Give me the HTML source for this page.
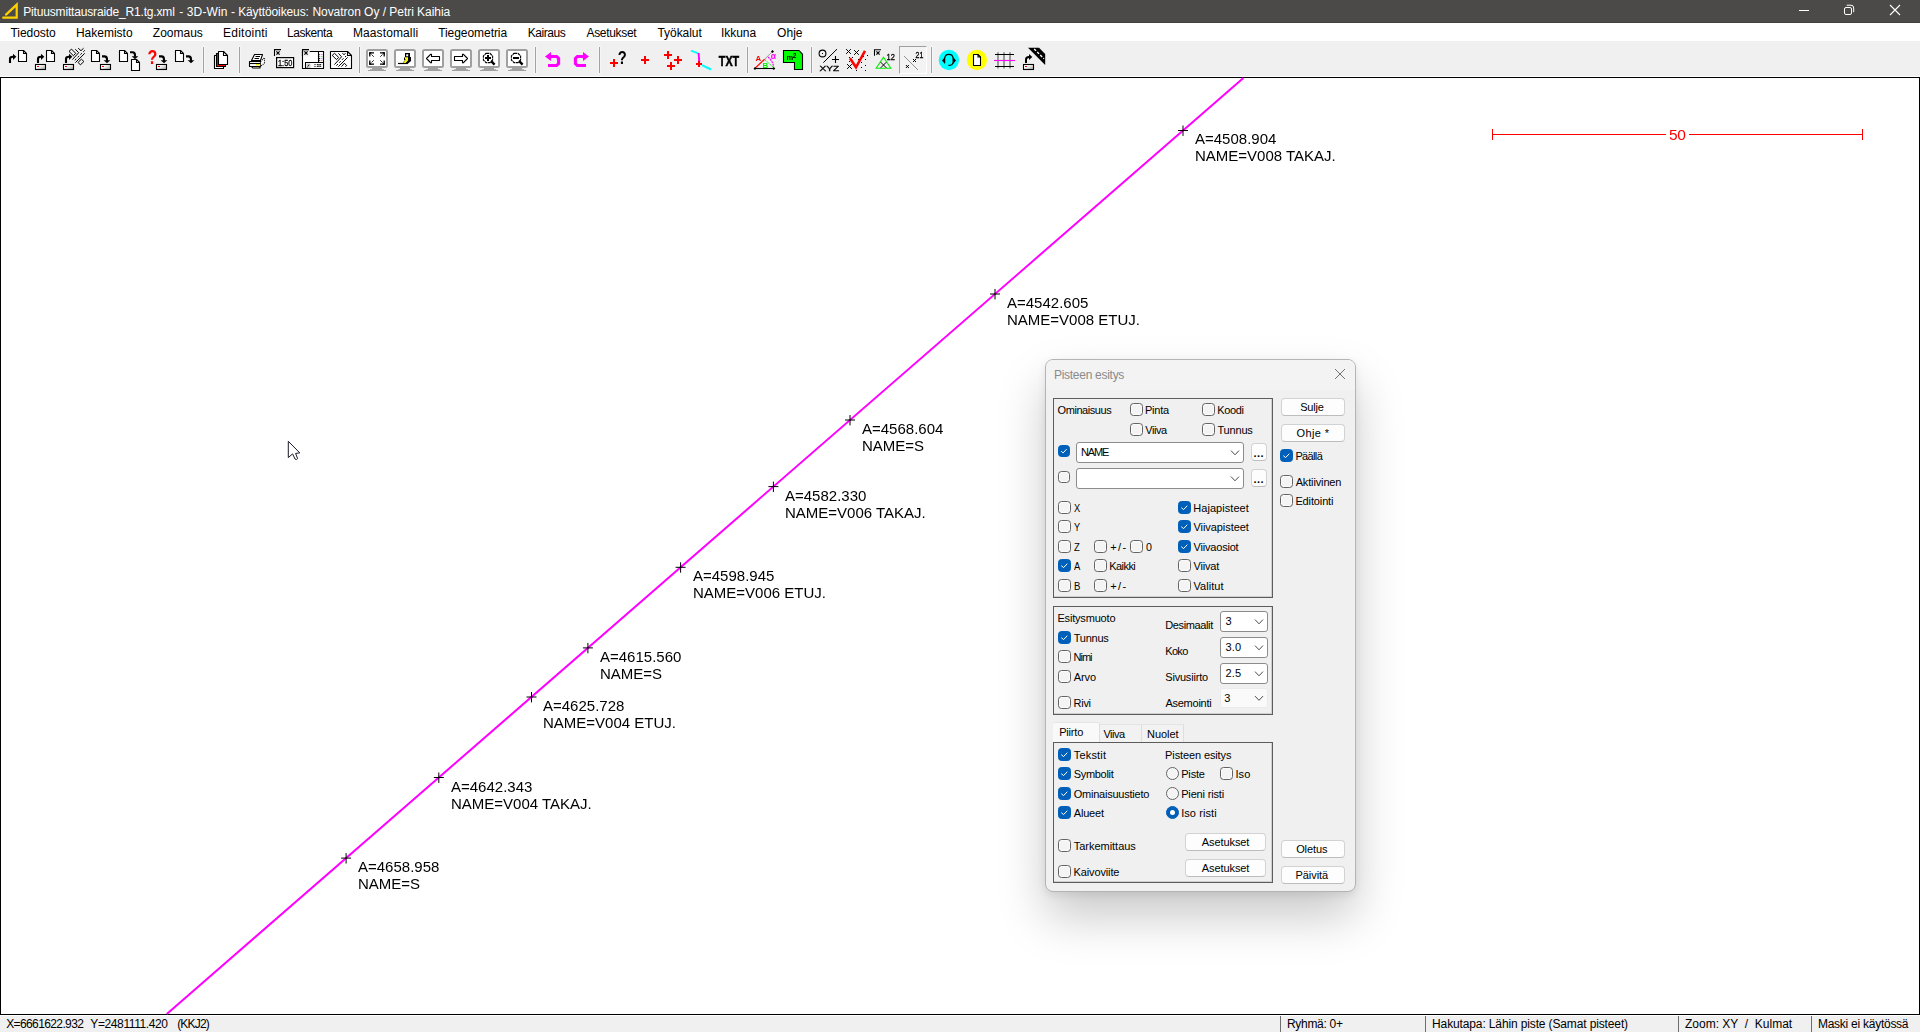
<!DOCTYPE html>
<html lang="fi">
<head>
<meta charset="utf-8">
<title>Pituusmittausraide_R1.tg.xml - 3D-Win</title>
<style>
html,body{margin:0;padding:0;}
body{width:1920px;height:1032px;position:relative;overflow:hidden;background:#fff;font-family:'Liberation Sans',sans-serif;}
.a{position:absolute;}
.g{will-change:transform;}
.t{position:absolute;white-space:pre;line-height:1;color:#000;font-family:'Liberation Sans',sans-serif;}
.cb{position:absolute;width:13px;height:13px;box-sizing:border-box;border:1px solid #636363;border-radius:3.5px;background:#f4f4f4;box-shadow:inset 0 0 0 1px #fbfbfb;}
.cb.on{border-color:#005fb8;background:#005fb8;box-shadow:none;}
.rb{position:absolute;width:13px;height:13px;box-sizing:border-box;border:1px solid #636363;border-radius:50%;background:#f4f4f4;box-shadow:inset 0 0 0 1px #fbfbfb;}
.rb.on{border-color:#005fb8;background:#005fb8;box-shadow:none;}
.rb.on:after{content:"";position:absolute;left:3px;top:3px;width:5px;height:5px;border-radius:50%;background:#fff;}
.btn{position:absolute;box-sizing:border-box;height:18px;border:1px solid #d2d2d2;border-bottom-color:#bdbdbd;border-radius:4px;background:#fdfdfd;}
.cmb{position:absolute;box-sizing:border-box;border:1px solid #8c8c8c;border-radius:3px;background:#fff;}
.grp{position:absolute;box-sizing:border-box;border:1px solid #5c5c5c;box-shadow:-1px -1px 0 #cfcfcf inset, 0 0 0 0 #fff;}
.sep{position:absolute;top:47px;width:1px;height:26px;background:#a2a2a2;box-shadow:0 0 0 1px rgba(255,255,255,.4);}
.ssep{position:absolute;top:1016px;width:1px;height:16px;background:#6e6e6e;}
</style>
</head>
<body>
<div class="a" style="left:0;top:0;width:1920px;height:23px;background:#4b4a48"></div>
<div class="a" style="left:0;top:22px;width:1920px;height:1px;background:#413f3d"></div>
<div class="a" style="left:0;top:23px;width:1920px;height:18px;background:#fff"></div>
<div class="a" style="left:0;top:41px;width:1920px;height:35px;background:#f0f0f0"></div>
<div class="a" style="left:0;top:76px;width:1920px;height:1px;background:#fff"></div>
<div class="a" style="left:0;top:77px;width:1920px;height:938px;box-sizing:border-box;border:1px solid #000;background:#fff"></div>
<div class="a" style="left:0;top:1015px;width:1920px;height:1px;background:#fff"></div>
<div class="a" style="left:0;top:1016px;width:1920px;height:16px;background:#f0f0f0"></div>
<svg class="a" style="left:0;top:0" width="1920" height="23" viewBox="0 0 1920 23">
<path d="M3.2,17.7 H16.7 V4.6 L6,14.6" fill="none" stroke="#ffd000" stroke-width="2.2" stroke-linejoin="miter" stroke-linecap="round"/>
<path d="M1799,10.5 H1809" stroke="#fff" stroke-width="1"/>
<rect x="1844.5" y="7.5" width="7" height="7" rx="1.5" fill="none" stroke="#fff" stroke-width="1"/>
<path d="M1846.7,5.2 H1851 Q1853.7,5.2 1853.7,8 V12.2" fill="none" stroke="#fff" stroke-width="1"/>
<path d="M1890,5 L1900,15 M1900,5 L1890,15" stroke="#fff" stroke-width="1.1"/>
</svg>
<div class="ssep" style="left:1280px"></div>
<div class="ssep" style="left:1425px"></div>
<div class="ssep" style="left:1678px"></div>
<div class="ssep" style="left:1811px"></div>
<svg class="a" style="left:0;top:77px" width="1920" height="938" viewBox="0 77 1920 938">
<path d="M1243.4,78 L166.8,1014" stroke="#ff00ff" stroke-width="2" fill="none"/>
<path d="M1178.0,130.5 h10 M1183.0,125.5 v10.4 M990.0,294.0 h10 M995.0,289.0 v10.4 M845.0,420.0 h10 M850.0,415.0 v10.4 M768.4,486.6 h10 M773.4,481.6 v10.4 M675.6,567.3 h10 M680.6,562.3 v10.4 M582.9,647.9 h10 M587.9,642.9 v10.4 M526.5,697.0 h10 M531.5,692.0 v10.4 M433.8,777.5 h10 M438.8,772.5 v10.4 M341.1,858.1 h10 M346.1,853.1 v10.4" stroke="#000" stroke-width="1" fill="none"/>
<path d="M1492.5,129 v11 M1862.5,129 v11 M1492,134.5 H1666 M1689,134.5 H1863" stroke="#ff0000" stroke-width="1" fill="none" shape-rendering="crispEdges"/>
<path d="M288.3,441.3 V457.6 L292.6,453.9 L295,459 Q296.3,460.4 297.6,458.6 L295.6,453.4 L299.8,452.9 Z" fill="#fff" stroke="#1b1b28" stroke-width="1" stroke-linejoin="round"/>
</svg>
<div class="a" style="left:1045px;top:359px;width:311px;height:533px;box-sizing:border-box;border:1px solid #b4b4b4;border-radius:8px;background:#f0f0f0;box-shadow:0 25px 48px rgba(0,0,0,.21),0 3px 8px rgba(0,0,0,.08);overflow:hidden"><div style="height:30px;background:#f3f3f3"></div></div>
<svg class="a" style="left:1330px;top:364px" width="20" height="20" viewBox="1330 364 20 20"><path d="M1335,369 L1345,379 M1345,369 L1335,379" stroke="#6a6a6a" stroke-width=".95"/></svg>
<div class="grp" style="left:1053px;top:398px;width:220px;height:200px"></div>
<div class="grp" style="left:1053px;top:606px;width:220px;height:109px"></div>
<div class="a" style="left:1053px;top:722px;width:47px;height:20px;box-sizing:border-box;border-top:1px solid #e6e6e6;border-right:1px solid #dedede;border-radius:2px 2px 0 0;background:#f9f9f9"></div>
<div class="a" style="left:1100px;top:724px;width:42px;height:18px;box-sizing:border-box;border-top:1px solid #e4e4e4;border-right:1px solid #dedede;background:#f2f2f2"></div>
<div class="a" style="left:1142px;top:724px;width:42px;height:18px;box-sizing:border-box;border-top:1px solid #e4e4e4;border-right:1px solid #dedede;background:#f2f2f2"></div>
<div class="grp" style="left:1053px;top:742px;width:220px;height:141px"></div>
<div class="cb" style="left:1130px;top:403px"></div>
<div class="cb" style="left:1202px;top:403px"></div>
<div class="cb" style="left:1130px;top:423px"></div>
<div class="cb" style="left:1202px;top:423px"></div>
<div class="cb on" style="left:1058px;top:445px;width:12px;height:12px"><svg width="10" height="10" viewBox="0 0 10 10" style="position:absolute;left:0;top:0"><path d="M2.2,5.2 L4.1,6.9 L7.6,3.2" fill="none" stroke="#fff" stroke-width="1"/></svg></div>
<div class="cb" style="left:1058px;top:471px;width:12px;height:12px"></div>
<div class="cmb" style="left:1076px;top:442px;width:168px;height:21px;"></div>
<svg class="a" style="left:1229px;top:442px" width="12" height="21" viewBox="1229 442 12 21"><path d="M1231,450.6 L1235,454.8 L1239,450.6" fill="none" stroke="#4a4a4a" stroke-width="1"/></svg>
<div class="cmb" style="left:1076px;top:468px;width:168px;height:21px;"></div>
<svg class="a" style="left:1229px;top:468px" width="12" height="21" viewBox="1229 468 12 21"><path d="M1231,476.6 L1235,480.8 L1239,476.6" fill="none" stroke="#4a4a4a" stroke-width="1"/></svg>
<div class="btn" style="left:1251px;top:443px;width:16px;height:18px"></div>
<div class="btn" style="left:1251px;top:469px;width:16px;height:18px"></div>
<div class="cb" style="left:1058px;top:501px"></div>
<div class="cb" style="left:1058px;top:520px"></div>
<div class="cb" style="left:1058px;top:540px"></div>
<div class="cb on" style="left:1058px;top:559px"><svg width="11" height="11" viewBox="0 0 11 11" style="position:absolute;left:0;top:0"><path d="M2.3,5.7 L4.6,7.6 L8.3,3.7" fill="none" stroke="#fff" stroke-width="1"/></svg></div>
<div class="cb" style="left:1058px;top:579px"></div>
<div class="cb" style="left:1094px;top:540px"></div>
<div class="cb" style="left:1130px;top:540px"></div>
<div class="cb" style="left:1094px;top:559px"></div>
<div class="cb" style="left:1094px;top:579px"></div>
<div class="cb on" style="left:1178px;top:501px"><svg width="11" height="11" viewBox="0 0 11 11" style="position:absolute;left:0;top:0"><path d="M2.3,5.7 L4.6,7.6 L8.3,3.7" fill="none" stroke="#fff" stroke-width="1"/></svg></div>
<div class="cb on" style="left:1178px;top:520px"><svg width="11" height="11" viewBox="0 0 11 11" style="position:absolute;left:0;top:0"><path d="M2.3,5.7 L4.6,7.6 L8.3,3.7" fill="none" stroke="#fff" stroke-width="1"/></svg></div>
<div class="cb on" style="left:1178px;top:540px"><svg width="11" height="11" viewBox="0 0 11 11" style="position:absolute;left:0;top:0"><path d="M2.3,5.7 L4.6,7.6 L8.3,3.7" fill="none" stroke="#fff" stroke-width="1"/></svg></div>
<div class="cb" style="left:1178px;top:559px"></div>
<div class="cb" style="left:1178px;top:579px"></div>
<div class="btn" style="left:1281px;top:398px;width:64px;height:18px"></div>
<div class="btn" style="left:1281px;top:424px;width:64px;height:18px"></div>
<div class="cb on" style="left:1280px;top:449px"><svg width="11" height="11" viewBox="0 0 11 11" style="position:absolute;left:0;top:0"><path d="M2.3,5.7 L4.6,7.6 L8.3,3.7" fill="none" stroke="#fff" stroke-width="1"/></svg></div>
<div class="cb" style="left:1280px;top:475px"></div>
<div class="cb" style="left:1280px;top:494px"></div>
<div class="btn" style="left:1281px;top:840px;width:64px;height:18px"></div>
<div class="btn" style="left:1281px;top:866px;width:64px;height:18px"></div>
<div class="cb on" style="left:1058px;top:631px"><svg width="11" height="11" viewBox="0 0 11 11" style="position:absolute;left:0;top:0"><path d="M2.3,5.7 L4.6,7.6 L8.3,3.7" fill="none" stroke="#fff" stroke-width="1"/></svg></div>
<div class="cb" style="left:1058px;top:650px"></div>
<div class="cb" style="left:1058px;top:670px"></div>
<div class="cb" style="left:1058px;top:696px"></div>
<div class="cmb" style="left:1220px;top:611px;width:48px;height:21px;"></div>
<svg class="a" style="left:1253px;top:611px" width="12" height="21" viewBox="1253 611 12 21"><path d="M1255,619.5999999999999 L1259,623.8 L1263,619.5999999999999" fill="none" stroke="#4a4a4a" stroke-width="1"/></svg>
<div class="cmb" style="left:1220px;top:637px;width:48px;height:21px;"></div>
<svg class="a" style="left:1253px;top:637px" width="12" height="21" viewBox="1253 637 12 21"><path d="M1255,645.5999999999999 L1259,649.8 L1263,645.5999999999999" fill="none" stroke="#4a4a4a" stroke-width="1"/></svg>
<div class="cmb" style="left:1220px;top:663px;width:48px;height:21px;"></div>
<svg class="a" style="left:1253px;top:663px" width="12" height="21" viewBox="1253 663 12 21"><path d="M1255,671.5999999999999 L1259,675.8 L1263,671.5999999999999" fill="none" stroke="#4a4a4a" stroke-width="1"/></svg>
<div class="cmb" style="left:1220px;top:688px;width:48px;height:20px;border-color:#ebebeb;background:#fafafa;"></div>
<svg class="a" style="left:1253px;top:688px" width="12" height="20" viewBox="1253 688 12 20"><path d="M1255,696.0999999999999 L1259,700.3 L1263,696.0999999999999" fill="none" stroke="#4a4a4a" stroke-width="1"/></svg>
<div class="cb on" style="left:1058px;top:748px"><svg width="11" height="11" viewBox="0 0 11 11" style="position:absolute;left:0;top:0"><path d="M2.3,5.7 L4.6,7.6 L8.3,3.7" fill="none" stroke="#fff" stroke-width="1"/></svg></div>
<div class="cb on" style="left:1058px;top:767px"><svg width="11" height="11" viewBox="0 0 11 11" style="position:absolute;left:0;top:0"><path d="M2.3,5.7 L4.6,7.6 L8.3,3.7" fill="none" stroke="#fff" stroke-width="1"/></svg></div>
<div class="cb on" style="left:1058px;top:787px"><svg width="11" height="11" viewBox="0 0 11 11" style="position:absolute;left:0;top:0"><path d="M2.3,5.7 L4.6,7.6 L8.3,3.7" fill="none" stroke="#fff" stroke-width="1"/></svg></div>
<div class="cb on" style="left:1058px;top:806px"><svg width="11" height="11" viewBox="0 0 11 11" style="position:absolute;left:0;top:0"><path d="M2.3,5.7 L4.6,7.6 L8.3,3.7" fill="none" stroke="#fff" stroke-width="1"/></svg></div>
<div class="cb" style="left:1058px;top:839px"></div>
<div class="cb" style="left:1058px;top:865px"></div>
<div class="rb" style="left:1166px;top:767px"></div>
<div class="cb" style="left:1220px;top:767px"></div>
<div class="rb" style="left:1166px;top:787px"></div>
<div class="rb on" style="left:1166px;top:806px"></div>
<div class="btn" style="left:1185px;top:833px;width:81px;height:18px"></div>
<div class="btn" style="left:1185px;top:859px;width:81px;height:18px"></div>
<div class="sep" style="left:203px"></div>
<div class="sep" style="left:239px"></div>
<div class="sep" style="left:359px"></div>
<div class="sep" style="left:535px"></div>
<div class="sep" style="left:599px"></div>
<div class="sep" style="left:747px"></div>
<div class="sep" style="left:811px"></div>
<div class="sep" style="left:931px"></div>
<div class="a" style="left:899px;top:46px;width:28px;height:28px;box-sizing:border-box;border:1px solid #a0a0a0;border-right-color:#fff;border-bottom-color:#fff;background:#f3f3f3"></div>
<svg class="a" style="left:0;top:41px" width="1100" height="36" viewBox="0 41 1100 36"><defs><linearGradient id="dg" x1="0" y1="0" x2="1" y2="1"><stop offset="0.35" stop-color="#fff"/><stop offset="1" stop-color="#9a9a9a"/></linearGradient></defs>
<path d="M10,63 V59 Q10,56.8 13,56.8 H14" fill="none" stroke="#000" stroke-width="2.1"/><path d="M13,53.7 L16.3,56.8 L13,59.9 Z" fill="#000"/><path d="M18.5,50.5 H23.5 L26.5,53.5 V61.5 H18.5 Z" fill="#fff" stroke="#000" stroke-width="1.1" stroke-linejoin="round"/><path d="M23.5,50.5 V53.5 H26.5" fill="none" stroke="#000" stroke-width="1.1"/>
<path d="M38,63 V59 Q38,56.8 41,56.8 H42" fill="none" stroke="#000" stroke-width="2.1"/><path d="M41,53.7 L44.3,56.8 L41,59.9 Z" fill="#000"/><path d="M46.5,50.5 H51.5 L54.5,53.5 V61.5 H46.5 Z" fill="#fff" stroke="#000" stroke-width="1.1" stroke-linejoin="round"/><path d="M51.5,50.5 V53.5 H54.5" fill="none" stroke="#000" stroke-width="1.1"/><rect x="35.5" y="64.5" width="10" height="5" fill="url(#dg)" stroke="#000" stroke-width="1.1"/><rect x="37" y="66" width="2" height="1" fill="#f00"/>
<path d="M66,63 V59 Q66,56.8 69,56.8 H70" fill="none" stroke="#000" stroke-width="2.1"/><path d="M69,53.7 L72.3,56.8 L69,59.9 Z" fill="#000"/><rect x="63.5" y="64.5" width="10" height="5" fill="url(#dg)" stroke="#000" stroke-width="1.1"/><rect x="65" y="66" width="2" height="1" fill="#f00"/><g stroke="#000" stroke-width="1" fill="none"><path d="M69.0,51.4 L71.5,49.1 L75.7,53.3 L73.4,55.7 Z"/><path d="M75.3,49.2 L78.7,52.7 L72.4,59.6"/><path d="M78.2,48.2 L81.0,50.7 L83.6,48.2"/><path d="M84.8,53.3 L75.3,62.7"/><path d="M81.4,59.2 L83.9,61.5 L80.4,64.9 L78.1,62.4 Z"/><path d="M84.8,50.3 L74.3,60.8" stroke-dasharray="2.2 1.8"/></g>
<path d="M91.5,50.5 H96.5 L99.5,53.5 V61.5 H91.5 Z" fill="#fff" stroke="#000" stroke-width="1.1" stroke-linejoin="round"/><path d="M96.5,50.5 V53.5 H99.5" fill="none" stroke="#000" stroke-width="1.1"/><path d="M102,56.4 H104.5 Q107,56.4 107,59.4 V60.9" fill="none" stroke="#000" stroke-width="2.1"/><path d="M103.7,60.3 H110.3 L107,63.3 Z" fill="#000"/><rect x="100.5" y="64.5" width="10" height="5" fill="url(#dg)" stroke="#000" stroke-width="1.1"/><rect x="102" y="66" width="2" height="1" fill="#f00"/>
<path d="M119.5,50.5 H124.5 L127.5,53.5 V61.5 H119.5 Z" fill="#fff" stroke="#000" stroke-width="1.1" stroke-linejoin="round"/><path d="M124.5,50.5 V53.5 H127.5" fill="none" stroke="#000" stroke-width="1.1"/><path d="M130,52.3 H132.5 Q135,52.3 135,55.3 V56.8" fill="none" stroke="#000" stroke-width="2.1"/><path d="M131.7,56.199999999999996 H138.3 L135,59.199999999999996 Z" fill="#000"/><path d="M131.5,59.5 H136.5 L139.5,62.5 V70.5 H131.5 Z" fill="#fff" stroke="#000" stroke-width="1.1" stroke-linejoin="round"/><path d="M136.5,59.5 V62.5 H139.5" fill="none" stroke="#000" stroke-width="1.1"/>

<path d="M159,56.4 H161.5 Q164,56.4 164,59.4 V60.9" fill="none" stroke="#000" stroke-width="2.1"/><path d="M160.7,60.3 H167.3 L164,63.3 Z" fill="#000"/><rect x="156.5" y="64.5" width="10" height="5" fill="url(#dg)" stroke="#000" stroke-width="1.1"/><rect x="158" y="66" width="2" height="1" fill="#f00"/>
<path d="M175.5,50.5 H180.5 L183.5,53.5 V61.5 H175.5 Z" fill="#fff" stroke="#000" stroke-width="1.1" stroke-linejoin="round"/><path d="M180.5,50.5 V53.5 H183.5" fill="none" stroke="#000" stroke-width="1.1"/><path d="M186,56.4 H188.5 Q191,56.4 191,59.4 V60.9" fill="none" stroke="#000" stroke-width="2.1"/><path d="M187.7,60.3 H194.3 L191,63.3 Z" fill="#000"/>
<path d="M214.5,55.5 H223.5 L223.5,55.5 V68.5 H214.5 Z" fill="#fff" stroke="#000" stroke-width="1.1" stroke-linejoin="round"/><path d="M223.5,55.5 V55.5 H223.5" fill="none" stroke="#000" stroke-width="1.1"/><path d="M216.5,53.5 H225.5 L225.5,53.5 V66.5 H216.5 Z" fill="#f00" stroke="#000" stroke-width="1.1" stroke-linejoin="round"/><path d="M225.5,53.5 V53.5 H225.5" fill="none" stroke="#000" stroke-width="1.1"/><path d="M218.5,51.5 H223.5 L227.5,55.5 V64.5 H218.5 Z" fill="#fff" stroke="#000" stroke-width="1.1" stroke-linejoin="round"/><path d="M223.5,51.5 V55.5 H227.5" fill="none" stroke="#000" stroke-width="1.1"/>
<g stroke="#000" stroke-width="1.1" fill="#fff" stroke-linejoin="round"><path d="M254.5,54.5 H262.5 L260.5,60.5 H251.5 Z"/><path d="M249.5,61.5 H260.5 V66.5 H249.5 Z"/><path d="M251.5,66.5 H260 V68 H252.8 Z"/><path d="M260.5,61.5 L264.5,57.8 V63 L260.5,66.5 Z" stroke-dasharray="1 1"/><path d="M249.5,63.5 H260.5" /></g><path d="M255.5,56.5 H260 M254.5,58.5 H259" stroke="#000" stroke-width="1"/><rect x="256" y="64" width="3" height="1.4" fill="#ee0"/>
<path d="M274.5,56 V49.6 H281" fill="none" stroke="#000" stroke-width="1.1"/><path d="M276.4,51.4 L279.6,54.6 M279.6,51.4 L276.4,54.6" stroke="#000" stroke-width="1.2" fill="none"/><rect x="276.6" y="57.6" width="17" height="10" fill="#fff" stroke="#000" stroke-width="1.2"/>
<path d="M302.5,51.5 H323.5 V68.5 H302.5 Z" fill="#fff" stroke="#000" stroke-width="1.1"/><path d="M302.5,56 V49.6 H309" fill="none" stroke="#000" stroke-width="1.1"/><rect x="303.2" y="50.3" width="6.5" height="6.3" fill="#f2f2f2"/><path d="M304.4,51.4 L307.6,54.6 M307.6,51.4 L304.4,54.6" stroke="#000" stroke-width="1.2" fill="none"/><path d="M302.5,51 V56 M302.5,49.6 H309" fill="none" stroke="#000" stroke-width="1.1"/><path d="M318.5,51.5 V62.5 M305.5,68.5 V62.5 H323.5" fill="none" stroke="#000" stroke-width="1.1"/><rect x="319" y="54" width="1.2" height="1.2" fill="#f0f"/><rect x="319" y="56" width="1.2" height="1.2" fill="#0e0"/><rect x="319" y="58" width="1.2" height="1.2" fill="#00f"/><rect x="319" y="60" width="1.2" height="1.2" fill="#f00"/><path d="M321,54.6 h1.6 M321,56.6 h1.6 M321,58.6 h1.6 M321,60.6 h1.6" stroke="#aaa" stroke-width="1"/><rect x="306.5" y="63.5" width="4" height="4.5" fill="#ccc"/><path d="M307,67.5 l2.5,-3.5 M315,64 v3 M317,64 l2,3 l2,-3 M317,67 l2,-3 l2,3" stroke="#000" stroke-width="1" fill="none" stroke-dasharray="1.2 .8"/>
<path d="M330.5,51.5 H347.5 L351.5,55.5 V68.5 H330.5 Z" fill="#fff" stroke="#000" stroke-width="1.1" stroke-linejoin="round"/><path d="M347.5,51.5 V55.5 H351.5" fill="none" stroke="#000" stroke-width="1.1"/><g stroke="#000" stroke-width="1" fill="none"><path d="M332.2,55.4 L334.5,53.3 L338.7,57.4 L336.5,59.6 Z"/><path d="M338.4,53.3 L341.6,56.8 L334.4,64.6"/><path d="M342.4,53.3 L344.0,54.6 L345.6,53.3"/><path d="M347.6,57.4 L338.4,66.6"/><path d="M341.5,66.6 L344.4,63.2 L346.7,65.6 L345.4,66.6"/><path d="M343.5,58.3 L336.4,65.6" stroke-dasharray="2.2 1.8"/></g><rect x="345" y="56" width="1.1" height="1.1" fill="#000"/>
<rect x="367" y="50" width="20" height="17" rx="1.5" fill="#fff" stroke="#a0a0a0" stroke-width="2"/><path d="M372,68 H382 V70 H372 Z M368,70 H386 V71 H368 Z M370,69.3 H384 V70 H370 Z" fill="#a0a0a0"/>
<rect x="395" y="50" width="20" height="17" rx="1.5" fill="#fff" stroke="#a0a0a0" stroke-width="2"/><path d="M400,68 H410 V70 H400 Z M396,70 H414 V71 H396 Z M398,69.3 H412 V70 H398 Z" fill="#a0a0a0"/>
<rect x="423" y="50" width="20" height="17" rx="1.5" fill="#fff" stroke="#a0a0a0" stroke-width="2"/><path d="M428,68 H438 V70 H428 Z M424,70 H442 V71 H424 Z M426,69.3 H440 V70 H426 Z" fill="#a0a0a0"/>
<rect x="451" y="50" width="20" height="17" rx="1.5" fill="#fff" stroke="#a0a0a0" stroke-width="2"/><path d="M456,68 H466 V70 H456 Z M452,70 H470 V71 H452 Z M454,69.3 H468 V70 H454 Z" fill="#a0a0a0"/>
<rect x="479" y="50" width="20" height="17" rx="1.5" fill="#fff" stroke="#a0a0a0" stroke-width="2"/><path d="M484,68 H494 V70 H484 Z M480,70 H498 V71 H480 Z M482,69.3 H496 V70 H482 Z" fill="#a0a0a0"/>
<rect x="507" y="50" width="20" height="17" rx="1.5" fill="#fff" stroke="#a0a0a0" stroke-width="2"/><path d="M512,68 H522 V70 H512 Z M508,70 H526 V71 H508 Z M510,69.3 H524 V70 H510 Z" fill="#a0a0a0"/>
<g stroke="#000" fill="none"><path d="M369.8,56.5 V52.8 H374 M380,52.8 H384.2 V56.5 M369.8,60.5 V64.2 H374 M380,64.2 H384.2 V60.5" stroke-width="1.3"/><path d="M370.5,53.5 L374,57 M383.5,53.5 L380,57 M370.5,63.5 L374,60 M383.5,63.5 L380,60" stroke-width="1" stroke-dasharray="1.3 .7"/></g><path d="M369.2,52.2 h2.6 l-2.6,2.6 Z M384.8,52.2 v2.6 l-2.6,-2.6 Z M369.2,64.8 v-2.6 l2.6,2.6 Z M384.8,64.8 h-2.6 l2.6,-2.6 Z" fill="#000"/>
<path d="M398,63.5 H407.5" stroke="#000" stroke-width="1.2"/><path d="M405,53 H410 V57 H411 V61 L407.5,64 H402 L405,60 H404 V57.5 H405 Z" fill="#000"/><rect x="406.2" y="54.3" width="2" height="2" fill="#fff"/><path d="M405,57.3 H408 V60.5 L405.5,63 H403 L406,59.5 H405 Z" fill="#ff0"/>
<path d="M426.5,58.5 L430.5,54.3 H431.5 V56.5 H439.5 V60.5 H431.5 V62.7 H430.5 Z" fill="#fff" stroke="#000" stroke-width="1.1" stroke-linejoin="round"/>
<path d="M467.5,58.5 L463.5,54.3 H462.5 V56.5 H454.5 V60.5 H462.5 V62.7 H463.5 Z" fill="#fff" stroke="#000" stroke-width="1.1" stroke-linejoin="round"/>
<path d="M486,53.4 h4 l2.6,2.6 v4 l-2.6,2.6 h-4 l-2.6,-2.6 v-4 Z" fill="#fff" stroke="#000" stroke-width="1.1" stroke-dasharray="3 .6"/><path d="M491.2,61.2 L494.6,64.6" stroke="#000" stroke-width="2.4"/><path d="M485,58 H491 M488,55 V61" stroke="#000" stroke-width="2" fill="none"/>
<path d="M514,53.4 h4 l2.6,2.6 v4 l-2.6,2.6 h-4 l-2.6,-2.6 v-4 Z" fill="#fff" stroke="#000" stroke-width="1.1" stroke-dasharray="3 .6"/><path d="M519.2,61.2 L522.6,64.6" stroke="#000" stroke-width="2.4"/><path d="M513,58 H519" stroke="#000" stroke-width="2"/>
<path d="M551,56.5 H556.6 L558.6,58.5 V63.5 L556.6,65.5 H548" fill="none" stroke="#f0f" stroke-width="3.1"/><path d="M545,56.5 L551,52 V61 Z" fill="#f0f"/>
<path d="M583,56.5 H577.4 L575.4,58.5 V63.5 L577.4,65.5 H586" fill="none" stroke="#f0f" stroke-width="3.1"/><path d="M589,56.5 L583,52 V61 Z" fill="#f0f"/>
<path d="M610,63 H618 M614,59 V67" stroke="#f00" stroke-width="2" fill="none"/><path d="M641,60 H649 M645,56 V64" stroke="#f00" stroke-width="2" fill="none"/><path d="M664,55 H672 M668,51 V59" stroke="#f00" stroke-width="2" fill="none"/><path d="M674,60 H682 M678,56 V64" stroke="#f00" stroke-width="2" fill="none"/><path d="M667,66 H675 M671,62 V70" stroke="#f00" stroke-width="2" fill="none"/>

<path d="M691,50.6 L698.3,53.4" stroke="#0ff" stroke-width="2"/><path d="M698.6,53 L699.3,62" stroke="#f0f" stroke-width="2"/><path d="M696,64 H702 M699,61 V67" stroke="#f00" stroke-width="2" fill="none"/><path d="M702,65.2 L711,69.5" stroke="#0ff" stroke-width="2"/>

<path d="M755,68.5 H774" stroke="#000" stroke-width="1.1"/><path d="M764.6,59.2 L772.5,51.5" stroke="#888" stroke-width=".8"/><path d="M755.3,68 L764.6,59.2" stroke="#f00" stroke-width="1.2"/><path d="M765,59.8 L773.5,67.6" stroke="#0e0" stroke-width="1" stroke-dasharray="1.5 .8"/><path d="M768,57 Q773,61 773.6,67" fill="none" stroke="#f0f" stroke-width="1.2" stroke-dasharray="2 .8"/><path d="M755,67 l1.5,1.5 l-1.5,1.5 l-1.5,-1.5 Z M773.8,67 l1.5,1.5 l-1.5,1.5 l-1.5,-1.5 Z M772.5,50 l1.5,1.5 l-1.5,1.5 l-1.5,-1.5 Z" fill="#000"/>
<path d="M783.5,50.5 H799 L802.5,54.3 V69.5 H794.5 V62.5 H783.5 Z" fill="#0f0" stroke="#000" stroke-width="1.1"/>
<circle cx="822.5" cy="53.5" r="3.4" fill="none" stroke="#000" stroke-width="1.1"/><rect x="822" y="53" width="1" height="1" fill="#000"/><path d="M823.3,62.7 L837,49.1" stroke="#000" stroke-width="1"/><path d="M832.0,59.5 H839.0 M835.5,56.0 V63.0" stroke="#000" stroke-width="1.1" fill="none"/>
<path d="M846.1,49.1 L850.9,53.9 M850.9,49.1 L846.1,53.9" stroke="#000" stroke-width="1" fill="none"/><path d="M854.1,50.1 L858.9,54.9 M858.9,50.1 L854.1,54.9" stroke="#000" stroke-width="1" fill="none"/><path d="M847.1,64.1 L851.9,68.9 M851.9,64.1 L847.1,68.9" stroke="#000" stroke-width="1" fill="none"/><g fill="#000"><rect x="867" y="55" width="1" height="1"/><rect x="865" y="59" width="1" height="1"/><rect x="861" y="62" width="1" height="1"/><rect x="865" y="65" width="1" height="1"/><rect x="861" y="67" width="1" height="1"/><rect x="856" y="70" width="1" height="1"/><rect x="865" y="70" width="1" height="1"/><rect x="849" y="57" width="1" height="1"/><rect x="849" y="61" width="1" height="1"/><rect x="852" y="57" width="1" height="1"/><rect x="863" y="56" width="1" height="1"/><rect x="858" y="59" width="1" height="1"/></g><path d="M850,58.3 L856,67.3 L865,50.9" fill="none" stroke="#f00" stroke-width="2.5" stroke-linejoin="miter"/>
<path d="M874.5,55.8 V49.7 H881" fill="none" stroke="#000" stroke-width="1.1"/><path d="M876.4,51.4 L879.6,54.6 M879.6,51.4 L876.4,54.6" stroke="#000" stroke-width="1.2" fill="none"/><path d="M883.5,57.3 L890.8,68.3 H876.2 Z" fill="none" stroke="#0e0" stroke-width="1.1"/><path d="M880.7,62.2 L886.3,67.8 M886.3,62.2 L880.7,67.8" stroke="#000" stroke-width="1" fill="none"/>
<path d="M904,56 L918,70" stroke="#888" stroke-width=".9"/><path d="M905.9,65.0 L908.9,68.0 M908.9,65.0 L905.9,68.0" stroke="#000" stroke-width="1" fill="none"/><path d="M913.0,59.0 L916.0,62.0 M916.0,59.0 L913.0,62.0" stroke="#000" stroke-width="1" fill="none"/>
<circle cx="948.9" cy="60" r="10.2" fill="#0ff"/><path d="M944.7,63 V59 Q944.7,54.4 948.9,54.4 Q953.1,54.4 953.1,59 V62 Q953,65.4 948.4,65.4" fill="none" stroke="#000" stroke-width="1.1"/><path d="M945,57 V64 L942,60.5 Z M953,57 V64 L956,60.5 Z" fill="#000"/>
<circle cx="976.9" cy="60" r="10.2" fill="#ff0"/><path d="M973.5,54.5 H978.0 L980.5,57.0 V65.5 H973.5 Z" fill="#fff" stroke="#000" stroke-width="1.1" stroke-linejoin="round"/><path d="M978.0,54.5 V57.0 H980.5" fill="none" stroke="#000" stroke-width="1.1"/>
<path d="M998,52.2 V68.6 M1004,52.2 V68.6 M1010,52.2 V68.6" stroke="#999" stroke-width="2"/><path d="M995,54.5 H1014 M995,66.5 H1014" stroke="#000" stroke-width="1.1"/><path d="M994,60.5 H1015" stroke="#f0f" stroke-width="1.1"/>
<rect x="1023.5" y="64.5" width="10" height="5" fill="url(#dg)" stroke="#000" stroke-width="1.1"/><rect x="1025" y="66" width="2" height="1" fill="#f00"/><path d="M1026,63 V59.5 Q1026,57 1029,57 H1030" fill="none" stroke="#000" stroke-width="2"/><path d="M1029,54 L1032.3,57 L1029,60 Z" fill="#000"/><path d="M1028,47.8 H1039 L1045.2,54 V65 Z" fill="#000"/><path d="M1034.2,49 L1044,58.8" stroke="#fff" stroke-width="1.4" stroke-dasharray="2.6 1.7"/></svg>
<svg class="a" style="left:0;top:41px;will-change:transform" width="1100" height="36" viewBox="0 41 1100 36"><text x="147.4" y="64.2" font-family="Liberation Sans, sans-serif" font-weight="700" font-size="19.6" fill="#f00" textLength="9.8" lengthAdjust="spacingAndGlyphs">?</text>
<text stroke="#000" stroke-width=".3" x="278" y="66" font-family="Liberation Sans, sans-serif" font-size="9.3" fill="#000" textLength="14.4" lengthAdjust="spacingAndGlyphs">1:50</text>
<text x="617.8" y="64.2" font-family="Liberation Sans, sans-serif" font-weight="700" font-size="18" fill="#000" textLength="9" lengthAdjust="spacingAndGlyphs">?</text>
<text x="718.8" y="66" font-family="Liberation Sans, sans-serif" font-weight="700" font-size="15" fill="#000" textLength="20.4" lengthAdjust="spacingAndGlyphs" stroke="#000" stroke-width=".5">TXT</text>
<text x="755.6" y="60.8" font-family="Liberation Sans, sans-serif" font-weight="700" font-size="7.8" fill="#f00">A</text>
<text x="762.6" y="67.8" font-family="Liberation Sans, sans-serif" font-weight="700" font-size="7.8" fill="#0e0">B</text>
<text x="770.8" y="58.9" font-family="Liberation Sans, sans-serif" font-weight="700" font-size="8.5" fill="#f0f">α</text>
<text x="786.6" y="59.8" font-family="Liberation Sans, sans-serif" font-weight="700" font-size="7.5" fill="#000">m</text>
<text x="792.8" y="57.8" font-family="Liberation Sans, sans-serif" font-weight="700" font-size="6.5" fill="#000">2</text>
<text stroke="#000" stroke-width=".3" x="819.6" y="70.9" font-family="Liberation Sans, sans-serif" font-size="7" fill="#000" textLength="19.6" lengthAdjust="spacingAndGlyphs">XYZ</text>
<text stroke="#000" stroke-width=".3" x="886.6" y="59.8" font-family="Liberation Sans, sans-serif" font-size="9.4" fill="#000" textLength="8.4" lengthAdjust="spacingAndGlyphs">12</text>
<text stroke="#000" stroke-width=".3" x="915.6" y="57.9" font-family="Liberation Sans, sans-serif" font-size="9.4" fill="#000" textLength="7.8" lengthAdjust="spacingAndGlyphs">21</text></svg>
<span class="t" style="left:23.18px;top:6px;font-size:12px;letter-spacing:-0.162px;color:#fff;">Pituusmittausraide_R1.tg.xml</span>
<span class="t" style="left:179.23px;top:6px;font-size:12px;letter-spacing:0.126px;color:#fff;">- 3D-Win -</span>
<span class="t" style="left:238.18px;top:6px;font-size:12px;letter-spacing:-0.113px;color:#fff;">Käyttöoikeus:</span>
<span class="t" style="left:312.38px;top:6px;font-size:12px;letter-spacing:-0.033px;color:#fff;">Novatron Oy / Petri Kaihia</span>
<span class="t" style="left:10.56px;top:27px;font-size:12px;letter-spacing:-0.068px;">Tiedosto</span>
<span class="t" style="left:75.88px;top:27px;font-size:12px;">Hakemisto</span>
<span class="t" style="left:152.81px;top:27px;font-size:12px;letter-spacing:0.005px;">Zoomaus</span>
<span class="t" style="left:223.08px;top:27px;font-size:12px;letter-spacing:0.221px;">Editointi</span>
<span class="t" style="left:286.88px;top:27px;font-size:12px;letter-spacing:-0.418px;">Laskenta</span>
<span class="t" style="left:352.88px;top:27px;font-size:12px;letter-spacing:0.121px;">Maastomalli</span>
<span class="t" style="left:438.16px;top:27px;font-size:12px;letter-spacing:-0.055px;">Tiegeometria</span>
<span class="t" style="left:527.78px;top:27px;font-size:12px;letter-spacing:-0.439px;">Kairaus</span>
<span class="t" style="left:586.45px;top:27px;font-size:12px;letter-spacing:-0.307px;">Asetukset</span>
<span class="t" style="left:657.46px;top:27px;font-size:12px;letter-spacing:-0.053px;">Työkalut</span>
<span class="t" style="left:720.97px;top:27px;font-size:12px;letter-spacing:-0.026px;">Ikkuna</span>
<span class="t" style="left:777.02px;top:27px;font-size:12px;letter-spacing:0.058px;">Ohje</span>
<span class="t" style="left:6.22px;top:1018px;font-size:12px;letter-spacing:-0.618px;">X=6661622.932</span>
<span class="t" style="left:90.33px;top:1018px;font-size:12px;letter-spacing:-0.391px;">Y=2481111.420</span>
<span class="t" style="left:177.15px;top:1018px;font-size:12px;letter-spacing:-0.804px;">(KKJ2)</span>
<span class="t" style="left:1286.88px;top:1018px;font-size:12px;letter-spacing:-0.276px;">Ryhmä: 0+</span>
<span class="t" style="left:1432.08px;top:1018px;font-size:12px;letter-spacing:-0.132px;">Hakutapa: Lähin piste (Samat pisteet)</span>
<span class="t" style="left:1685.01px;top:1018px;font-size:12px;">Zoom: XY  /  Kulmat</span>
<span class="t" style="left:1817.98px;top:1018px;font-size:12px;letter-spacing:-0.258px;">Maski ei käytössä</span>
<span class="t g" style="left:1194.86px;top:131px;font-size:15px;">A=4508.904</span>
<span class="t g" style="left:1194.67px;top:148px;font-size:15px;">NAME=V008 TAKAJ.</span>
<span class="t g" style="left:1006.86px;top:295px;font-size:15px;">A=4542.605</span>
<span class="t g" style="left:1006.67px;top:312px;font-size:15px;">NAME=V008 ETUJ.</span>
<span class="t g" style="left:861.86px;top:421px;font-size:15px;">A=4568.604</span>
<span class="t g" style="left:861.67px;top:438px;font-size:15px;">NAME=S</span>
<span class="t g" style="left:784.86px;top:488px;font-size:15px;">A=4582.330</span>
<span class="t g" style="left:784.67px;top:505px;font-size:15px;">NAME=V006 TAKAJ.</span>
<span class="t g" style="left:692.86px;top:568px;font-size:15px;">A=4598.945</span>
<span class="t g" style="left:692.67px;top:585px;font-size:15px;">NAME=V006 ETUJ.</span>
<span class="t g" style="left:599.86px;top:649px;font-size:15px;">A=4615.560</span>
<span class="t g" style="left:599.67px;top:666px;font-size:15px;">NAME=S</span>
<span class="t g" style="left:542.86px;top:698px;font-size:15px;">A=4625.728</span>
<span class="t g" style="left:542.67px;top:715px;font-size:15px;">NAME=V004 ETUJ.</span>
<span class="t g" style="left:450.86px;top:779px;font-size:15px;">A=4642.343</span>
<span class="t g" style="left:450.67px;top:796px;font-size:15px;">NAME=V004 TAKAJ.</span>
<span class="t g" style="left:357.86px;top:859px;font-size:15px;">A=4658.958</span>
<span class="t g" style="left:357.67px;top:876px;font-size:15px;">NAME=S</span>
<span class="t g" style="left:1669.29px;top:127px;font-size:15.5px;letter-spacing:-0.250px;color:#ff0000;">50</span>
<span class="t" style="left:1053.98px;top:369px;font-size:12px;letter-spacing:-0.280px;color:#8a8a8a;">Pisteen esitys</span>
<span class="t" style="left:1057.57px;top:405px;font-size:11px;letter-spacing:-0.442px;">Ominaisuus</span>
<span class="t" style="left:1145.01px;top:405px;font-size:11px;letter-spacing:-0.220px;">Pinta</span>
<span class="t" style="left:1217.33px;top:405px;font-size:11px;letter-spacing:-0.373px;">Koodi</span>
<span class="t" style="left:1145.28px;top:425px;font-size:11px;letter-spacing:-0.434px;">Viiva</span>
<span class="t" style="left:1217.47px;top:425px;font-size:11px;letter-spacing:-0.181px;">Tunnus</span>
<span class="t" style="left:1081.01px;top:447px;font-size:11px;letter-spacing:-1.120px;">NAME</span>
<span class="t" style="left:1253.47px;top:448px;font-size:11px;letter-spacing:0.517px;font-weight:700;">...</span>
<span class="t" style="left:1253.47px;top:474px;font-size:11px;letter-spacing:0.517px;font-weight:700;">...</span>
<span class="t" style="left:1073.69px;top:503px;font-size:11px;transform:scaleX(0.845);transform-origin:0 0;">X</span>
<span class="t" style="left:1073.73px;top:522px;font-size:11px;transform:scaleX(0.835);transform-origin:0 0;">Y</span>
<span class="t" style="left:1073.75px;top:542px;font-size:11px;transform:scaleX(0.862);transform-origin:0 0;">Z</span>
<span class="t" style="left:1073.76px;top:561px;font-size:11px;transform:scaleX(0.858);transform-origin:0 0;">A</span>
<span class="t" style="left:1073.56px;top:581px;font-size:11px;transform:scaleX(0.872);transform-origin:0 0;">B</span>
<span class="t" style="left:1110.35px;top:542px;font-size:11px;letter-spacing:1.286px;">+/-</span>
<span class="t" style="left:1145.71px;top:542px;font-size:11px;transform:scaleX(0.971);transform-origin:0 0;">0</span>
<span class="t" style="left:1109.22px;top:561px;font-size:11px;letter-spacing:-0.555px;">Kaikki</span>
<span class="t" style="left:1110.35px;top:581px;font-size:11px;letter-spacing:1.286px;">+/-</span>
<span class="t" style="left:1193.31px;top:503px;font-size:11px;letter-spacing:0.045px;">Hajapisteet</span>
<span class="t" style="left:1193.55px;top:522px;font-size:11px;letter-spacing:-0.073px;">Viivapisteet</span>
<span class="t" style="left:1193.55px;top:542px;font-size:11px;letter-spacing:-0.194px;">Viivaosiot</span>
<span class="t" style="left:1193.55px;top:561px;font-size:11px;letter-spacing:-0.189px;">Viivat</span>
<span class="t" style="left:1193.55px;top:581px;font-size:11px;letter-spacing:0.026px;">Valitut</span>
<span class="t" style="left:1300.17px;top:402px;font-size:11px;letter-spacing:-0.191px;">Sulje</span>
<span class="t" style="left:1296.46px;top:428px;font-size:11px;letter-spacing:0.380px;">Ohje *</span>
<span class="t" style="left:1295.41px;top:451px;font-size:11px;letter-spacing:-0.645px;">Päällä</span>
<span class="t" style="left:1295.64px;top:477px;font-size:11px;letter-spacing:-0.139px;">Aktiivinen</span>
<span class="t" style="left:1295.41px;top:496px;font-size:11px;letter-spacing:-0.131px;">Editointi</span>
<span class="t" style="left:1296.15px;top:844px;font-size:11px;letter-spacing:-0.086px;">Oletus</span>
<span class="t" style="left:1295.51px;top:870px;font-size:11px;letter-spacing:-0.047px;">Päivitä</span>
<span class="t" style="left:1057.41px;top:613px;font-size:11px;letter-spacing:-0.180px;">Esitysmuoto</span>
<span class="t" style="left:1073.77px;top:633px;font-size:11px;letter-spacing:-0.261px;">Tunnus</span>
<span class="t" style="left:1073.62px;top:652px;font-size:11px;letter-spacing:-1.031px;">Nimi</span>
<span class="t" style="left:1073.84px;top:672px;font-size:11px;letter-spacing:-0.115px;">Arvo</span>
<span class="t" style="left:1073.61px;top:698px;font-size:11px;letter-spacing:-0.306px;">Rivi</span>
<span class="t" style="left:1165.21px;top:620px;font-size:11px;letter-spacing:-0.369px;">Desimaalit</span>
<span class="t" style="left:1165.22px;top:646px;font-size:11px;letter-spacing:-0.680px;">Koko</span>
<span class="t" style="left:1165.27px;top:672px;font-size:11px;letter-spacing:-0.198px;">Sivusiirto</span>
<span class="t" style="left:1165.44px;top:698px;font-size:11px;letter-spacing:-0.259px;">Asemointi</span>
<span class="t" style="left:1225.50px;top:616px;font-size:11px;">3</span>
<span class="t" style="left:1225.50px;top:642px;font-size:11px;letter-spacing:0.225px;">3.0</span>
<span class="t" style="left:1225.54px;top:668px;font-size:11px;letter-spacing:0.198px;">2.5</span>
<span class="t" style="left:1224.30px;top:693px;font-size:11px;">3</span>
<span class="t" style="left:1059.21px;top:727px;font-size:11px;letter-spacing:-0.197px;">Piirto</span>
<span class="t" style="left:1103.38px;top:729px;font-size:11px;letter-spacing:-0.459px;">Viiva</span>
<span class="t" style="left:1147.12px;top:729px;font-size:11px;letter-spacing:-0.082px;">Nuolet</span>
<span class="t" style="left:1073.77px;top:750px;font-size:11px;letter-spacing:0.180px;">Tekstit</span>
<span class="t" style="left:1073.67px;top:769px;font-size:11px;letter-spacing:-0.303px;">Symbolit</span>
<span class="t" style="left:1073.75px;top:789px;font-size:11px;letter-spacing:-0.232px;">Ominaisuustieto</span>
<span class="t" style="left:1073.84px;top:808px;font-size:11px;letter-spacing:-0.209px;">Alueet</span>
<span class="t" style="left:1073.77px;top:841px;font-size:11px;letter-spacing:-0.028px;">Tarkemittaus</span>
<span class="t" style="left:1073.62px;top:867px;font-size:11px;letter-spacing:-0.135px;">Kaivoviite</span>
<span class="t" style="left:1165.11px;top:750px;font-size:11px;letter-spacing:-0.122px;">Pisteen esitys</span>
<span class="t" style="left:1181.21px;top:769px;font-size:11px;letter-spacing:-0.173px;">Piste</span>
<span class="t" style="left:1235.49px;top:769px;font-size:11px;letter-spacing:0.045px;">Iso</span>
<span class="t" style="left:1181.21px;top:789px;font-size:11px;letter-spacing:-0.175px;">Pieni risti</span>
<span class="t" style="left:1181.18px;top:808px;font-size:11px;letter-spacing:0.071px;">Iso risti</span>
<span class="t" style="left:1201.74px;top:837px;font-size:11px;letter-spacing:-0.081px;">Asetukset</span>
<span class="t" style="left:1201.74px;top:863px;font-size:11px;letter-spacing:-0.081px;">Asetukset</span>
</body>
</html>
